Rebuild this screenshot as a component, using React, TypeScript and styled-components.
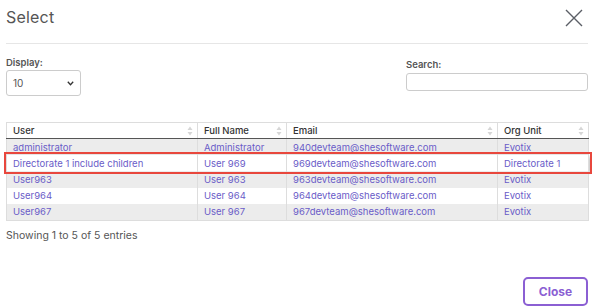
import React from "react";
import styled, { createGlobalStyle } from "styled-components";

const Global = createGlobalStyle`
  html, body { margin: 0; padding: 0; background: #fff; }
  body { font-family: Inter, "Noto Sans", sans-serif; color: #444; }
`;

const Modal = styled.div`
  width: 592px;
  height: 308px;
  box-sizing: border-box;
  padding: 0 4px 0 6px;
  display: flex;
  flex-direction: column;
`;

const Header = styled.div`
  height: 44px;
  box-sizing: border-box;
  border-bottom: 1px solid #e6e6e6;
  display: flex;
  align-items: flex-start;
  justify-content: space-between;
  padding-top: 7px;
`;

const Title = styled.h1`
  margin: 0;
  font-size: 16px;
  font-weight: 400;
  color: #555;
  letter-spacing: 0.2px;
`;

const CloseX = styled.button`
  border: 0;
  background: none;
  padding: 0;
  margin: 1px 4px 0 0;
  width: 20px;
  height: 20px;
  cursor: pointer;
`;

const Controls = styled.div`
  display: flex;
  justify-content: space-between;
  margin-top: 13px;
  height: 52px;
`;

const Field = styled.div<{ $w: number }>`
  display: flex;
  flex-direction: column;
  width: ${(p) => p.$w}px;
`;

const Label = styled.label<{ $mt?: number }>`
  font-size: 9.5px;
  font-weight: 600;
  color: #555;
  margin-top: ${(p) => p.$mt ?? 0}px;
  margin-bottom: 2px;
`;

const SelectBox = styled.div`
  height: 26px;
  box-sizing: border-box;
  border: 1px solid #ccc;
  border-radius: 3px;
  display: flex;
  align-items: center;
  justify-content: space-between;
  padding: 0 6px 0 6px;
  font-size: 10px;
  color: #555;
`;

const Input = styled.div`
  height: 18px;
  box-sizing: border-box;
  border: 1px solid #ccc;
  border-radius: 3px;
  margin-top: 1px;
`;

const Table = styled.table`
  margin-top: 13px;
  width: 582px;
  table-layout: fixed;
  border-collapse: collapse;
  font-size: 9.5px;
  border: 1px solid #ddd;
`;

const Th = styled.th<{ $w: number }>`
  width: ${(p) => p.$w}px;
  box-sizing: border-box;
  text-align: left;
  font-weight: 500;
  color: #333;
  height: 16px;
  padding: 0 6px;
  border-right: 1px solid #ddd;
  border-bottom: 1px solid #555;
  position: relative;
`;

const SortIcon = styled.svg`
  position: absolute;
  right: 4px;
  top: 3px;
`;

const Tr = styled.tr<{ $odd: boolean; $hl?: boolean }>`
  background: ${(p) => (p.$odd ? "#ececec" : "#fff")};
  outline: ${(p) => (p.$hl ? "2px solid #e8473d" : "none")};
  outline-offset: 1px;
  box-shadow: ${(p) => (p.$hl ? "0 2px 3px rgba(0,0,0,0.45)" : "none")};
`;

const Td = styled.td`
  height: 16.2px;
  padding: 0 6px;
  color: #6a5cc8;
  border-right: 1px solid #ddd;
  white-space: nowrap;
`;

const Info = styled.div`
  margin-top: 8px;
  font-size: 10.5px;
  color: #555;
`;

const Footer = styled.div`
  margin-top: auto;
  display: flex;
  justify-content: flex-end;
  padding-bottom: 2px;
`;

const CloseButton = styled.button`
  width: 65px;
  height: 29px;
  border: 2px solid #8b5fd3;
  border-radius: 5px;
  background: #fff;
  color: #8b5fd3;
  font-family: Inter, sans-serif;
  font-weight: 700;
  font-size: 12px;
`;

const rows = [
  ["administrator", "Administrator", "940devteam@shesoftware.com", "Evotix"],
  ["Directorate 1 include children", "User 969", "969devteam@shesoftware.com", "Directorate 1"],
  ["User963", "User 963", "963devteam@shesoftware.com", "Evotix"],
  ["User964", "User 964", "964devteam@shesoftware.com", "Evotix"],
  ["User967", "User 967", "967devteam@shesoftware.com", "Evotix"],
];

const cols: [string, number][] = [
  ["User", 191],
  ["Full Name", 89],
  ["Email", 211],
  ["Org Unit", 91],
];

const Sort = () => (
  <SortIcon width="6" height="10" viewBox="0 0 6 10">
    <path d="M3 0.5 L5.5 4 L0.5 4 Z" fill="#d6d6d6" />
    <path d="M3 9.5 L5.5 6 L0.5 6 Z" fill="#d6d6d6" />
  </SortIcon>
);

export default function App() {
  return (
    <>
      <Global />
      <Modal>
        <Header>
          <Title>Select</Title>
          <CloseX aria-label="close">
            <svg width="20" height="20" viewBox="0 0 20 20">
              <path d="M2 2 L18 18 M18 2 L2 18" stroke="#5b5f66" strokeWidth="1.4" />
            </svg>
          </CloseX>
        </Header>
        <Controls>
          <Field $w={75}>
            <Label>Display:</Label>
            <SelectBox>
              <span>10</span>
              <svg width="7" height="5" viewBox="0 0 7 5">
                <path d="M0.8 0.8 L3.5 3.8 L6.2 0.8" stroke="#333" strokeWidth="1.3" fill="none" />
              </svg>
            </SelectBox>
          </Field>
          <Field $w={182}>
            <Label $mt={2}>Search:</Label>
            <Input />
          </Field>
        </Controls>
        <Table>
          <thead>
            <tr>
              {cols.map(([c, w]) => (
                <Th key={c} $w={w}>
                  {c}
                  <Sort />
                </Th>
              ))}
            </tr>
          </thead>
          <tbody>
            {rows.map((r, i) => (
              <Tr key={i} $odd={i % 2 === 0} $hl={i === 1}>
                {r.map((c, j) => (
                  <Td key={j}>{c}</Td>
                ))}
              </Tr>
            ))}
          </tbody>
        </Table>
        <Info>Showing 1 to 5 of 5 entries</Info>
        <Footer>
          <CloseButton>Close</CloseButton>
        </Footer>
      </Modal>
    </>
  );
}
